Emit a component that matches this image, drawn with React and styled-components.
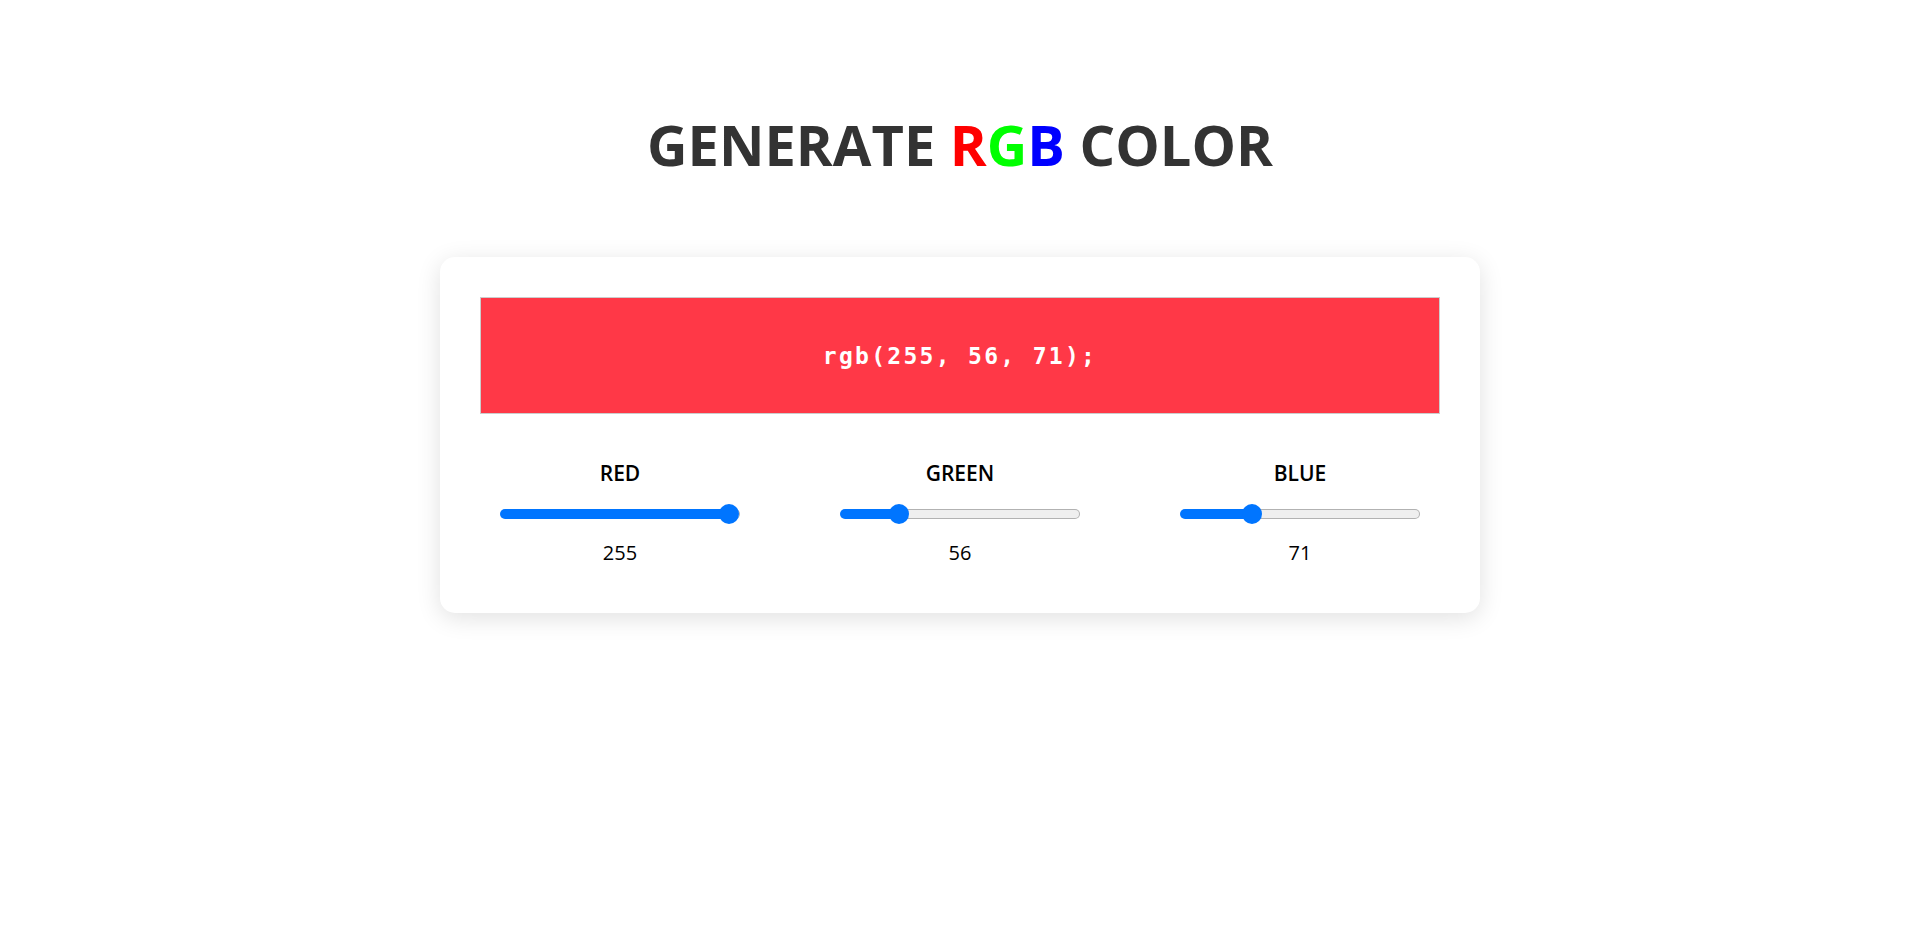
import styled, { createGlobalStyle } from "styled-components";
import { useState } from "react";

const GlobalStyle = createGlobalStyle`
  * {
    box-sizing: border-box;
  }
  body {
    margin: 0;
    background: #fff;
    font-family: "Open Sans", "Noto Sans", sans-serif;
  }
`;

const CHANNELS = [
  { key: "r", label: "RED" },
  { key: "g", label: "GREEN" },
  { key: "b", label: "BLUE" },
];

export default function App() {
  const [color, setColor] = useState({ r: 255, g: 56, b: 71 });

  const rgb = `rgb(${color.r}, ${color.g}, ${color.b})`;

  const onChange = (key) => (e) => {
    setColor({ ...color, [key]: Number(e.target.value) });
  };

  return (
    <Page>
      <GlobalStyle />
      <Title>
        GENERATE <Letter color="#ff0000">R</Letter>
        <Letter color="#00ff00">G</Letter>
        <Letter color="#0000ff">B</Letter> COLOR
      </Title>
      <Card>
        <Preview style={{ background: rgb }}>
          <Code>{rgb};</Code>
        </Preview>
        <Controls>
          {CHANNELS.map((c) => (
            <Channel key={c.key}>
              <Label>{c.label}</Label>
              <Range
                value={color[c.key]}
                onChange={onChange(c.key)}
                style={{ "--fill": `calc(10px + ${color[c.key] / 255} * 220px)` }}
              />
              <Value>{color[c.key]}</Value>
            </Channel>
          ))}
        </Controls>
      </Card>
    </Page>
  );
}

const Page = styled.main`
  display: flex;
  flex-direction: column;
  align-items: center;
  padding: 106px 0 120px;
`;

const Title = styled.h1`
  margin: 0 0 75px;
  font-size: 56px;
  line-height: 76px;
  font-weight: 700;
  color: #333;
`;

const Letter = styled.span`
  color: ${({ color }) => color};
`;

const Card = styled.section`
  width: 1040px;
  padding: 40px 40px 47px;
  background: #fff;
  border-radius: 15px;
  box-shadow: 0 5px 25px rgba(0, 0, 0, 0.12);
`;

const Preview = styled.div`
  height: 117px;
  display: flex;
  align-items: center;
  justify-content: center;
  border: 1px solid #ccc;
`;

const Code = styled.span`
  font-family: "DejaVu Sans Mono", "Liberation Mono", monospace;
  font-weight: 700;
  font-size: 23px;
  letter-spacing: 2.3px;
  color: #fff;
`;

const Controls = styled.div`
  display: flex;
  justify-content: space-between;
  margin-top: 45px;
`;

const Channel = styled.div`
  width: 280px;
  display: flex;
  flex-direction: column;
  align-items: center;
`;

const Label = styled.span`
  font-size: 21px;
  line-height: 28px;
  font-weight: 600;
  color: #000;
`;

const Range = styled.input.attrs({ type: "range", min: 0, max: 255 })`
  -webkit-appearance: none;
  appearance: none;
  width: 240px;
  height: 20px;
  margin: 17px 0 15px;
  background: transparent;
  cursor: pointer;

  &::-webkit-slider-runnable-track {
    box-sizing: border-box;
    height: 10px;
    border-radius: 5px;
    border: 1px solid transparent;
    background:
      linear-gradient(to right, #0075ff var(--fill), transparent var(--fill)) border-box,
      linear-gradient(#efefef, #efefef) padding-box,
      #b2b2b2 border-box;
  }

  &::-webkit-slider-thumb {
    -webkit-appearance: none;
    width: 20px;
    height: 20px;
    margin-top: -6px;
    border-radius: 50%;
    background: #0075ff;
  }
`;

const Value = styled.span`
  font-size: 20px;
  line-height: 27px;
  color: #000;
`;
